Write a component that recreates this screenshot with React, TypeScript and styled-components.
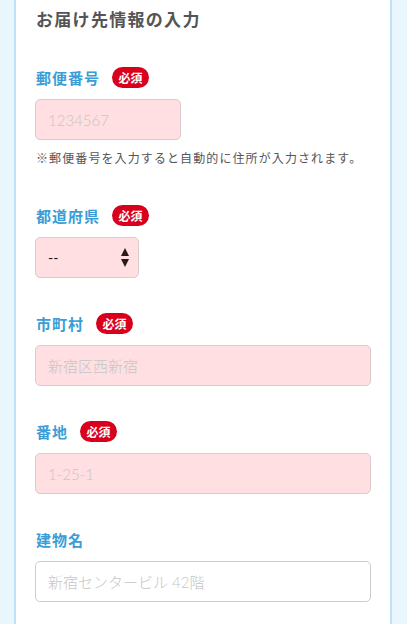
import React from "react";
import styled, { createGlobalStyle } from "styled-components";

const GlobalStyle = createGlobalStyle`
  html, body {
    margin: 0;
    padding: 0;
    background: #eaf6fd;
    overflow: hidden;
  }
  body {
    font-family: Lato, "Noto Sans CJK JP", sans-serif;
    color: #555;
  }
  * { box-sizing: border-box; }
`;

const Page = styled.div`
  padding: 0 15px 0 14px;
`;

const Card = styled.section`
  margin-top: -20px;
  background: #ffffff;
  border: 2px solid #bfe2f6;
  padding: 24px 19px 40px 19px;
  display: flex;
  flex-direction: column;
`;

const Heading = styled.h2`
  margin: 0 0 35px 1px;
  font-family: "Noto Sans CJK JP", sans-serif;
  font-size: 17px;
  line-height: 26px;
  font-weight: 700;
  letter-spacing: 1.3px;
  color: #555555;
`;

const Fields = styled.div`
  display: flex;
  flex-direction: column;
  gap: 35px;
`;

const Field = styled.div`
  display: flex;
  flex-direction: column;
`;

const LabelRow = styled.div`
  display: flex;
  align-items: center;
  gap: 12px;
  height: 21px;
  margin-bottom: 11px;
  padding-left: 1px;
`;

const Label = styled.label`
  font-family: "Noto Sans CJK JP", sans-serif;
  font-size: 15px;
  font-weight: 700;
  letter-spacing: 1px;
  color: #3a9dd6;
  line-height: 21px;
`;

const Badge = styled.span`
  display: inline-flex;
  align-items: center;
  justify-content: center;
  height: 21px;
  width: 37px;
  border-radius: 11px;
  background: #d9001b;
  color: #ffffff;
  font-family: "Noto Sans CJK JP", sans-serif;
  font-size: 12px;
  font-weight: 700;
  line-height: 1;
`;

const Input = styled.input<{ $required?: boolean; $w?: string }>`
  width: ${(p) => p.$w ?? "100%"};
  height: 41px;
  border: 1px solid ${(p) => (p.$required ? "#dccbcc" : "#cccccc")};
  border-radius: 5px;
  background: ${(p) => (p.$required ? "#ffdfe1" : "#ffffff")};
  padding: 0 12px;
  font-family: Lato, "Noto Sans CJK JP", sans-serif;
  font-size: 15px;
  font-weight: 300;
  color: #333;
  outline: none;
  &::placeholder {
    color: #c6c6c6;
    font-weight: 300;
  }
`;

const SelectWrap = styled.div`
  position: relative;
  width: 104px;
  height: 41px;
`;

const Select = styled.select`
  appearance: none;
  -webkit-appearance: none;
  width: 100%;
  height: 100%;
  border: 1px solid #dccbcc;
  border-radius: 5px;
  background: #ffdfe1;
  padding: 0 12px;
  font-family: Lato, "Noto Sans CJK JP", sans-serif;
  font-size: 14px;
  color: #111;
  outline: none;
`;

const Arrows = styled.svg`
  position: absolute;
  right: 10px;
  top: 11px;
  pointer-events: none;
`;

const Note = styled.p`
  margin: 6px 0 0 1px;
  font-family: "Noto Sans CJK JP", sans-serif;
  font-size: 12px;
  line-height: 24px;
  color: #555555;
  letter-spacing: 1.1px;
  white-space: nowrap;
`;

type FieldDef = {
  label: string;
  required: boolean;
  placeholder: string;
  width?: string;
};

const TextField: React.FC<FieldDef & { children?: React.ReactNode }> = ({
  label,
  required,
  placeholder,
  width,
  children,
}) => (
  <Field>
    <LabelRow>
      <Label>{label}</Label>
      {required && <Badge>必須</Badge>}
    </LabelRow>
    <Input $required={required} $w={width} placeholder={placeholder} />
    {children}
  </Field>
);

export default function App() {
  return (
    <>
      <GlobalStyle />
      <Page>
        <Card>
          <Heading>お届け先情報の入力</Heading>
          <Fields>
            <TextField label="郵便番号" required placeholder="1234567" width="146px">
              <Note>※郵便番号を入力すると自動的に住所が入力されます。</Note>
            </TextField>
            <Field>
              <LabelRow>
                <Label>都道府県</Label>
                <Badge>必須</Badge>
              </LabelRow>
              <SelectWrap>
                <Select defaultValue="--">
                  <option value="--">--</option>
                  <option value="tokyo">東京都</option>
                </Select>
                <Arrows width="8" height="20" viewBox="0 0 8 20">
                  <path d="M4 0 L8 8 L0 8 Z" fill="#2a1a1a" />
                  <path d="M0 11 L8 11 L4 19 Z" fill="#2a1a1a" />
                </Arrows>
              </SelectWrap>
            </Field>
            <TextField label="市町村" required placeholder="新宿区西新宿" />
            <TextField label="番地" required placeholder="1-25-1" />
            <TextField label="建物名" required={false} placeholder="新宿センタービル 42階" />
          </Fields>
        </Card>
      </Page>
    </>
  );
}
